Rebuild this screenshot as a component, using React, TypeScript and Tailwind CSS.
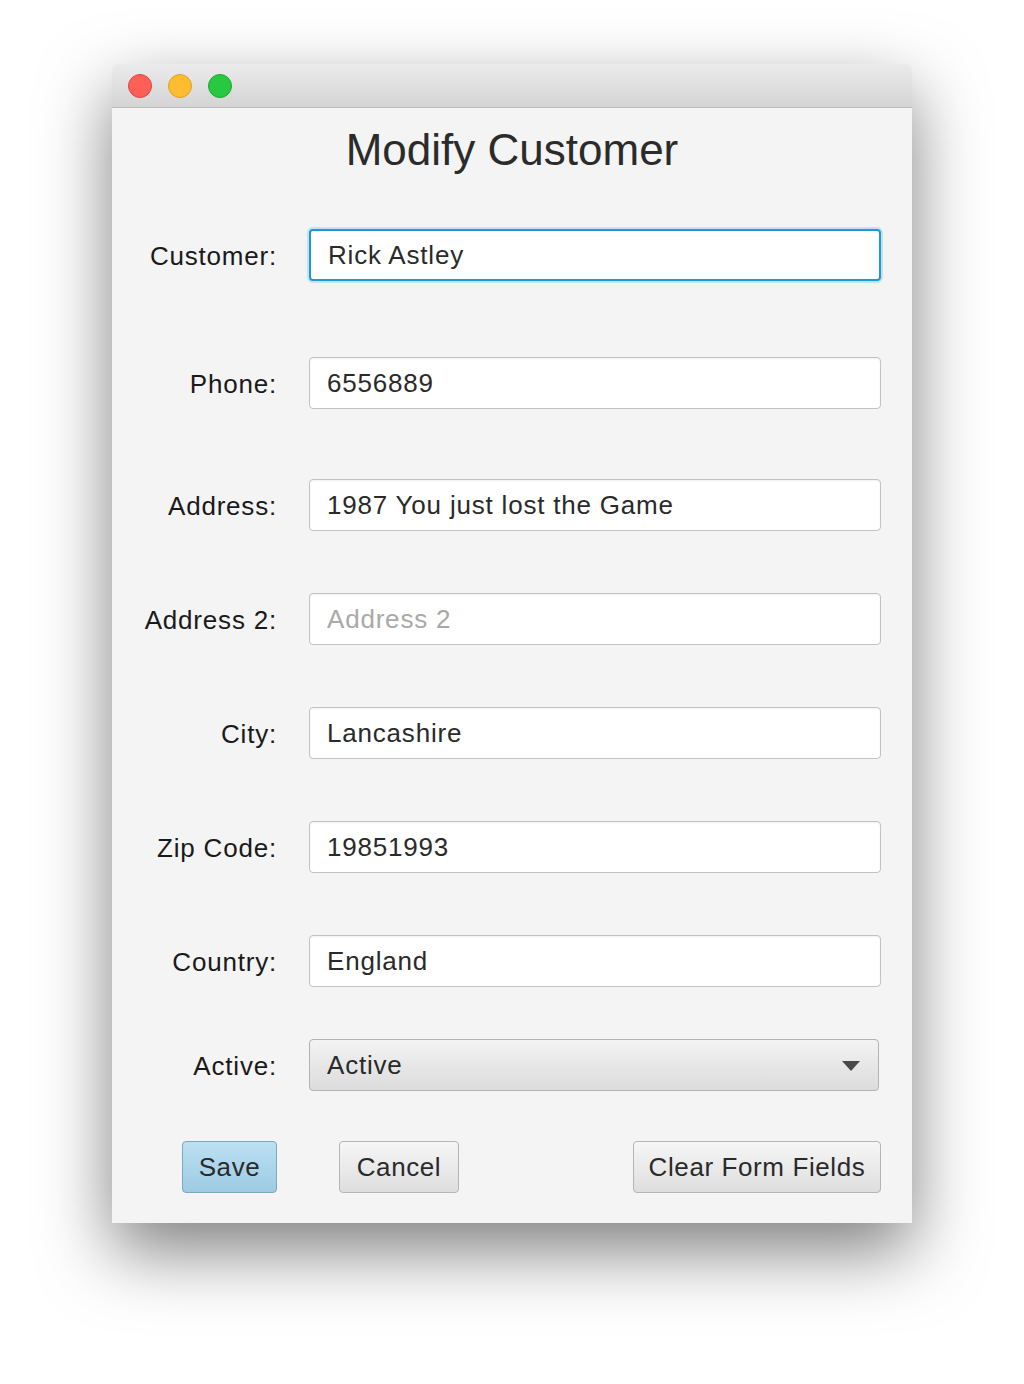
import React from 'react'

const font = { fontFamily: '"Liberation Sans", Arial, sans-serif' }

type Row = { label: string; value: string; placeholder?: boolean; focused?: boolean; mt: string }

const rows: Row[] = [
  { label: 'Customer:', value: 'Rick Astley', focused: true, mt: 'mt-[53px]' },
  { label: 'Phone:', value: '6556889', mt: 'mt-[76px]' },
  { label: 'Address:', value: '1987 You just lost the Game', mt: 'mt-[70px]' },
  { label: 'Address 2:', value: 'Address 2', placeholder: true, mt: 'mt-[62px]' },
  { label: 'City:', value: 'Lancashire', mt: 'mt-[62px]' },
  { label: 'Zip Code:', value: '19851993', mt: 'mt-[62px]' },
  { label: 'Country:', value: 'England', mt: 'mt-[62px]' },
]

function Field({ row }: { row: Row }) {
  return (
    <div className={`flex items-center ${row.mt}`}>
      <div className="w-[165px] text-right text-[26px] tracking-[0.8px] text-[#1a1a1a] pt-[2px]">{row.label}</div>
      <div
        className={`ml-[32px] w-[572px] h-[52px] rounded-[4px] bg-white flex items-center pl-[17px] pt-[1px] text-[26px] tracking-[0.8px] ${
          row.focused
            ? 'border-2 border-[#1b9ad6] shadow-[0_0_0_2px_rgba(120,190,230,0.35)]'
            : 'border border-[#c2c2c2] shadow-[inset_0_1px_2px_rgba(0,0,0,0.06)]'
        } ${row.placeholder ? 'text-[#a9a9a9]' : 'text-[#2a2a2a]'}`}
      >
        {row.value}
      </div>
    </div>
  )
}

export default function App() {
  return (
    <div className="min-h-[1384px] bg-white pt-[64px] pl-[112px]" style={font}>
      <div className="w-[800px] h-[1159px] rounded-t-[6px] bg-[#f4f4f4] shadow-[0_28px_70px_rgba(0,0,0,0.5)] flex flex-col overflow-hidden">
        {/* title bar */}
        <div className="h-[44px] shrink-0 bg-gradient-to-b from-[#ebebeb] to-[#d4d4d4] border-b border-[#b9b9b9] flex items-center gap-[16px] pl-[16px]">
          <span className="w-[24px] h-[24px] rounded-full bg-[#fe5f57] border border-[#e0443e]" />
          <span className="w-[24px] h-[24px] rounded-full bg-[#febc2e] border border-[#dea123]" />
          <span className="w-[24px] h-[24px] rounded-full bg-[#28c840] border border-[#1aab29]" />
        </div>

        <div className="pt-[16px]">
          <h1 className="text-center text-[44px] leading-[52px] text-[#2b2b2b]">Modify Customer</h1>

          {rows.map((r) => (
            <Field key={r.label} row={r} />
          ))}

          <div className="flex items-center mt-[52px]">
            <div className="w-[165px] text-right text-[26px] tracking-[0.8px] text-[#1a1a1a] pt-[2px]">Active:</div>
            <div className="ml-[32px] w-[570px] h-[52px] rounded-[4px] border border-[#b3b3b3] bg-gradient-to-b from-[#f3f3f3] to-[#dcdcdc] flex items-center justify-between pl-[17px] pr-[18px] pt-[1px] text-[26px] tracking-[0.8px] text-[#2a2a2a]">
              <span>Active</span>
              <svg width="18" height="10" viewBox="0 0 18 10">
                <path d="M0 0h18L9 10z" fill="#4a4a4a" />
              </svg>
            </div>
          </div>

          <div className="flex items-center mt-[50px] pr-[31px]">
            <button className="ml-[70px] w-[95px] h-[52px] pt-[1px] rounded-[4px] border border-[#7ea6be] bg-gradient-to-b from-[#bde0f2] to-[#9ccbe4] text-[26px] tracking-[0.6px] text-[#2a2a2a]">
              Save
            </button>
            <button className="ml-[62px] w-[120px] h-[52px] pt-[1px] rounded-[4px] border border-[#b5b5b5] bg-gradient-to-b from-[#f6f6f6] to-[#dedede] text-[26px] tracking-[0.6px] text-[#2a2a2a]">
              Cancel
            </button>
            <button className="ml-auto w-[248px] h-[52px] pt-[1px] rounded-[4px] border border-[#b5b5b5] bg-gradient-to-b from-[#f6f6f6] to-[#dedede] text-[26px] tracking-[0.6px] text-[#2a2a2a]">
              Clear Form Fields
            </button>
          </div>
        </div>
      </div>
    </div>
  )
}
